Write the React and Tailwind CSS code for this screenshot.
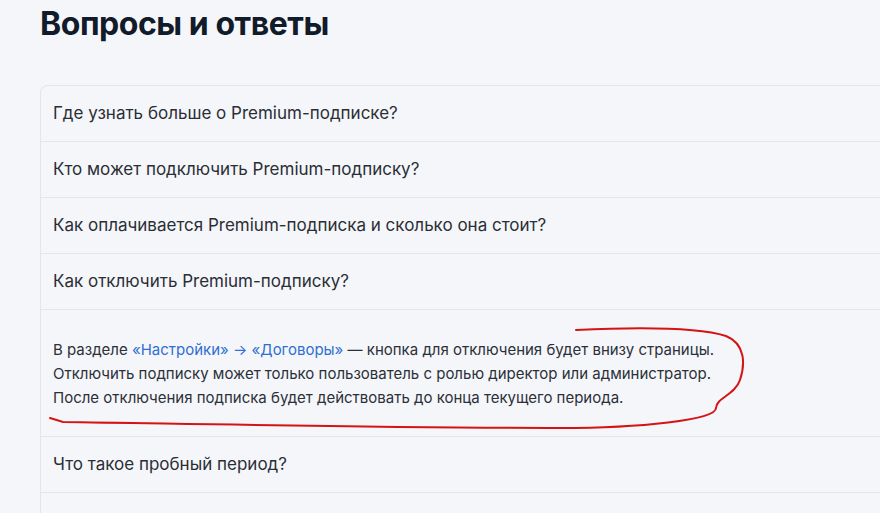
import React from 'react';

const questions = [
  'Где узнать больше о Premium-подписке?',
  'Кто может подключить Premium-подписку?',
  'Как оплачивается Premium-подписка и сколько она стоит?',
  'Как отключить Premium-подписку?',
];

function Row({ children }) {
  return (
    <div className="h-14 flex items-center px-3 border-b border-[#e3e5ea] text-[17px] text-[#2a2e35]">
      {children}
    </div>
  );
}

export default function App() {
  return (
    <div
      className="relative w-[880px] h-[513px] overflow-hidden bg-[#f5f6fa] pl-10 pt-1"
      style={{ fontFamily: 'Inter, "Noto Sans", sans-serif' }}
    >
      <h1 className="text-[32px] leading-10 font-bold text-[#111b29] tracking-[-0.45px]">Вопросы и ответы</h1>

      <div className="mt-[41px] w-[1000px] rounded-tl-lg border-l border-t border-[#e3e5ea] bg-[#f5f6fa]">
        {questions.map((q) => (
          <Row key={q}>{q}</Row>
        ))}
        <div className="px-3 pt-[28px] pb-[26px] border-b border-[#e3e5ea] text-[15px] leading-6 text-[#2b3038]">
          <p>
            В разделе <span className="text-[#2f6fd1]">«Настройки» → «Договоры»</span> — кнопка для отключения будет внизу страницы.
          </p>
          <p>Отключить подписку может только пользователь с ролью директор или администратор.</p>
          <p>После отключения подписка будет действовать до конца текущего периода.</p>
        </div>
        <Row>Что такое пробный период?</Row>
        <Row>{''}</Row>
      </div>

      <svg className="absolute left-0 top-0 pointer-events-none" width="880" height="513">
        <path
          d="M576 330 C640 327, 700 328, 726 336 C746 344, 745 365, 740 380 C735 395, 716 398, 716 408 C716 420, 640 428, 560 428 C400 428, 200 424, 63 422 L50 418"
          fill="none"
          stroke="#d41414"
          strokeWidth="2"
          strokeLinecap="round"
        />
      </svg>
    </div>
  );
}
